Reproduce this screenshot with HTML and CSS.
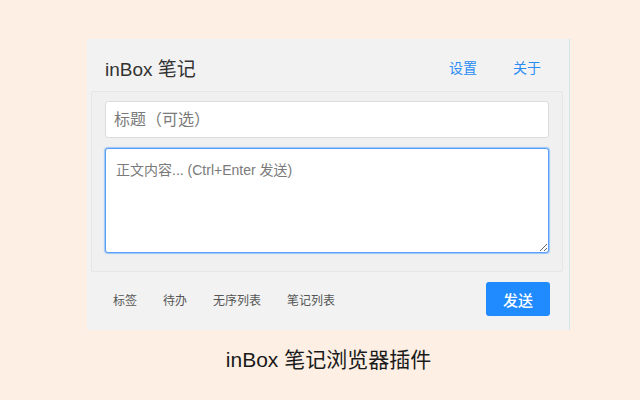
FILE: index.html
```html
<!DOCTYPE html>
<html lang="zh">
<head>
<meta charset="utf-8">
<title>inBox 笔记</title>
<link rel="stylesheet" href="styles.css">
</head>
<body>
<div class="stage">
  <div class="panel">
    <header class="header">
      <div class="brand">inBox 笔记</div>
      <nav class="links">
        <a class="link">设置</a>
        <a class="link">关于</a>
      </nav>
    </header>
    <div class="card">
      <input class="title-input" type="text" placeholder="标题（可选）">
      <textarea class="body-input" placeholder="正文内容... (Ctrl+Enter 发送)" autofocus></textarea>
    </div>
    <div class="toolbar">
      <div class="tools">
        <span class="tool">标签</span>
        <span class="tool">待办</span>
        <span class="tool">无序列表</span>
        <span class="tool">笔记列表</span>
      </div>
      <button class="send">发送</button>
    </div>
  </div>
  <div class="caption">inBox 笔记浏览器插件</div>
</div>
</body>
</html>
```
FILE: styles.css
```css
* { box-sizing: border-box; }
html, body { margin: 0; padding: 0; }
body {
  background: #fdefe3;
  font-family: "Liberation Sans", "Noto Sans CJK SC", sans-serif;
  width: 640px;
  height: 400px;
  overflow: hidden;
}
.stage {
  padding: 39px 0 0 87px;
  width: 570px;
}
.panel {
  width: 483px;
  height: 291px;
  background: #f2f2f2;
  border-right: 1px solid #d3e5ec;
  display: flex;
  flex-direction: column;
}
.header {
  height: 52px;
  display: flex;
  align-items: center;
  justify-content: space-between;
  padding: 4px 28px 0 18px;
}
.brand {
  font-size: 19px;
  color: #333;
}
.links {
  display: flex;
  gap: 36px;
}
.link {
  font-size: 14px;
  color: #2a8cf5;
  cursor: pointer;
}
.card {
  margin: 0 6px 0 4px;
  height: 181px;
  background: #f0f0f0;
  border: 1px solid #e6e6e6;
  border-radius: 2px;
  padding: 9px 13px 18px 13px;
  display: flex;
  flex-direction: column;
  gap: 10px;
}
.title-input {
  height: 37px;
  width: 100%;
  border: 1px solid #dcdcdc;
  border-radius: 3px;
  background: #fff;
  padding: 0 8px;
  font-family: inherit;
  font-size: 16px;
  color: #333;
  outline: none;
}
.title-input::placeholder { color: #7a7a7a; }
.body-input {
  height: 105px;
  width: 100%;
  border: 1px solid #5a9ff6;
  box-shadow: 0 0 1px 1px #9cc6fa;
  border-radius: 3px;
  background: #fff;
  padding: 11px 10px;
  font-family: inherit;
  font-size: 14px;
  line-height: 20px;
  color: #333;
  outline: none;
  resize: vertical;
}
.body-input::placeholder { color: #7a7a7a; }
.toolbar {
  flex: 1;
  display: flex;
  align-items: flex-start;
  justify-content: space-between;
  padding: 10px 19px 0 13px;
}
.tools {
  display: flex;
  height: 34px;
  align-items: center;
}
.tool {
  padding: 0 13px;
  font-size: 12px;
  color: #555;
}
.send {
  width: 64px;
  height: 34px;
  border: none;
  border-radius: 3px;
  background: #1f8bff;
  color: #fff;
  font-family: inherit;
  font-size: 15px;
  font-weight: 500;
  padding: 0;
}
.caption {
  width: 483px;
  margin-top: 16px;
  text-align: center;
  font-size: 21px;
  line-height: 28px;
  color: #1a1a1a;
}
```
